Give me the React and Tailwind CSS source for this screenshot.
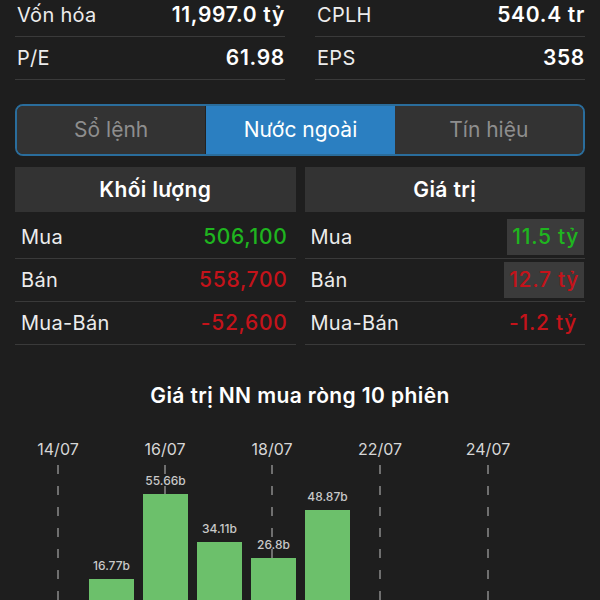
const stats = [
  [['Vốn hóa', '11,997.0 tỷ'], ['CPLH', '540.4 tr']],
  [['P/E', '61.98'], ['EPS', '358']],
];

const tabs = ['Sổ lệnh', 'Nước ngoài', 'Tín hiệu'];

const volume = [
  { label: 'Mua', value: '506,100', color: 'text-[#1fb51f]' },
  { label: 'Bán', value: '558,700', color: 'text-[#c4131a]' },
  { label: 'Mua-Bán', value: '-52,600', color: 'text-[#c4131a]' },
];

const amount = [
  { label: 'Mua', value: '11.5 tỷ', color: 'text-[#1fb51f]', boxed: true },
  { label: 'Bán', value: '12.7 tỷ', color: 'text-[#c4131a]', boxed: true },
  { label: 'Mua-Bán', value: '-1.2 tỷ', color: 'text-[#c4131a]' },
];

const dates = [
  { x: 58, label: '14/07' },
  { x: 165, label: '16/07' },
  { x: 272, label: '18/07' },
  { x: 380, label: '22/07' },
  { x: 488, label: '24/07' },
];

const bars = [
  { x: 89, top: 578, label: '16.77b' },
  { x: 143, top: 493, label: '55.66b' },
  { x: 197, top: 541, label: '34.11b' },
  { x: 251, top: 557, label: '26.8b' },
  { x: 305, top: 509, label: '48.87b' },
];

function Chart() {
  // svg starts at page y=430
  const oy = 430;
  return (
    <svg width="600" height="200" className="block">
      {dates.map((d) => (
        <g key={d.label}>
          <text x={d.x} y={448 - oy + 6} textAnchor="middle" fill="#d6d6d6" fontSize="16">
            {d.label}
          </text>
          <line
            x1={d.x}
            x2={d.x}
            y1={464 - oy}
            y2={200}
            stroke="#8a8a8a"
            strokeWidth="1.5"
            strokeDasharray="9 12"
          />
        </g>
      ))}
      {bars.map((b) => (
        <g key={b.label}>
          <rect x={b.x} y={b.top - oy} width="45" height={200} fill="#6cc06b" />
          <text
            x={b.x + 22.5}
            y={b.top - oy - 9}
            textAnchor="middle"
            fill="#c9c9c9"
            fontSize="12"
            fontWeight="500"
          >
            {b.label}
          </text>
        </g>
      ))}
    </svg>
  );
}

function Table({ title, rows }) {
  return (
    <div className="flex flex-col">
      <div className="h-[45px] mb-[4px] bg-[#333333] flex items-center justify-center text-[21px] tracking-[0.4px] font-semibold text-white">
        {title}
      </div>
      {rows.map((r) => (
        <div
          key={r.label}
          className="h-[43px] flex items-center justify-between pl-[6px] pr-[2px] border-b border-[#3a3a3a]"
        >
          <span className="text-[20px] tracking-[0.3px] text-[#ececec]">{r.label}</span>
          <span
            className={`text-[21px] tracking-[0.7px] font-medium ${r.color} ${
              r.boxed ? 'bg-[#3b3b3b] h-[36px] flex items-center px-[5px] mr-[-1px]' : 'pr-[6px]'
            }`}
          >
            {r.value}
          </span>
        </div>
      ))}
    </div>
  );
}

export default function App() {
  return (
    <div
      className="w-[600px] h-[600px] overflow-hidden bg-[#1e1e1e] text-white"
      style={{ fontFamily: 'Inter, "Noto Sans", sans-serif' }}
    >
      <div className="-mt-[6px] px-[15px] flex flex-col">
        {stats.map((row, i) => (
          <div key={i} className="grid grid-cols-2 gap-[30px]">
            {row.map(([k, v]) => (
              <div
                key={k}
                className="h-[43px] flex items-center justify-between border-b border-[#3a3a3a]"
              >
                <span className="text-[20px] tracking-[0.3px] text-[#ececec] pl-[2px]">{k}</span>
                <span className="text-[21px] tracking-[0.7px] font-semibold text-white">{v}</span>
              </div>
            ))}
          </div>
        ))}
      </div>

      <div className="mt-[24px] mx-[15px] h-[52px] rounded-[8px] border-2 border-[#2a6d9c] overflow-hidden flex bg-[#2e2e2e]">
        {tabs.map((t, i) => (
          <div
            key={t}
            className={`flex-1 flex items-center justify-center text-[21px] ${
              i === 1
                ? 'bg-[#2b7fc1] text-white'
                : 'bg-[#333333] text-[#8e8e8e]'
            } ${i === 0 ? 'border-r border-[#222]' : ''}`}
          >
            {t}
          </div>
        ))}
      </div>

      <div className="mt-[11px] px-[15px] grid grid-cols-2 gap-[9px]">
        <Table title="Khối lượng" rows={volume} />
        <Table title="Giá trị" rows={amount} />
      </div>

      <div className="mt-[35px] text-center text-[21px] tracking-[0.4px] font-semibold text-white">
        Giá trị NN mua ròng 10 phiên
      </div>

      <div className="mt-[19px]">
        <Chart />
      </div>
    </div>
  );
}
